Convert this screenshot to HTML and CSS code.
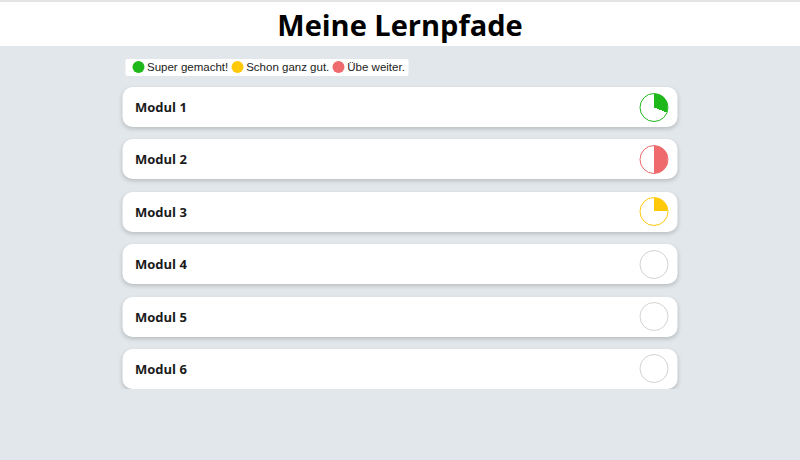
FILE: index.html
```html
<!DOCTYPE html>
<html lang="de">
<head>
    <meta charset="UTF-8">
    <meta name="viewport" content="width=device-width, initial-scale=1.0">
    <title>Meine Lernpfade</title>
    <link rel="stylesheet" href="styles.css">
</head>
<body>
    <header class="header">
        <h1>Meine Lernpfade</h1>
    </header>

    <main class="content">
        <div class="legend">
            <span class="dot dot-green"></span><span>Super gemacht!</span>
            <span class="dot dot-yellow"></span><span>Schon ganz gut.</span>
            <span class="dot dot-red"></span><span>Übe weiter.</span>
        </div>

        <div class="modules">
            <div class="module">
                <span class="module-name">Modul 1</span>
                <div class="progress green" style="--p: 31%"></div>
            </div>
            <div class="module">
                <span class="module-name">Modul 2</span>
                <div class="progress red" style="--p: 50%"></div>
            </div>
            <div class="module">
                <span class="module-name">Modul 3</span>
                <div class="progress yellow" style="--p: 25%"></div>
            </div>
            <div class="module">
                <span class="module-name">Modul 4</span>
                <div class="progress"></div>
            </div>
            <div class="module">
                <span class="module-name">Modul 5</span>
                <div class="progress"></div>
            </div>
            <div class="module">
                <span class="module-name">Modul 6</span>
                <div class="progress"></div>
            </div>
        </div>
    </main>
</body>
</html>
```

FILE: styles.css
```css
body {
    margin: 0;
    padding: 0;
    background-color: #e2e7eb;
    font-family: "Open Sans", sans-serif;
    color: #111;
}

.header {
    background-color: #fff;
    border-top: 2px solid #e4e4e4;
    height: 44px;
    display: flex;
    align-items: center;
    justify-content: center;
}

.header h1 {
    margin: 0;
    font-size: 29px;
    font-weight: 700;
    color: #000;
}

.content {
    width: 555px;
    margin: 0 auto;
    padding-top: 10px;
    transform: translateX(-0.5px);
}

.legend {
    display: inline-flex;
    align-items: center;
    gap: 3px;
    margin-left: 3px;
    padding: 0 4px 0 7px;
    background-color: #fff;
    border-radius: 2px;
    font-family: "Liberation Sans", Arial, sans-serif;
    font-size: 11.5px;
    color: #222;
    height: 17px;
}

.dot {
    width: 12px;
    height: 12px;
    border-radius: 50%;
    display: inline-block;
}

.dot-green { background-color: #1fb81b; }
.dot-yellow { background-color: #ffc90a; }
.dot-red { background-color: #ee6a6d; }

.modules {
    display: flex;
    flex-direction: column;
    gap: 12.4px;
    margin-top: 9px;
}

.module {
    height: 40px;
    background-color: #fff;
    border-radius: 10px;
    box-shadow: 0 2px 4px rgba(0, 0, 0, 0.18);
    display: flex;
    align-items: center;
    justify-content: space-between;
    padding: 0 9px 0 13px;
}

.module-name {
    font-size: 13px;
    font-weight: 700;
    color: #1a1a1a;
}

.progress {
    width: 27px;
    height: 27px;
    border-radius: 50%;
    border: 1px solid #d2d2d2;
    background-color: #fff;
}

.progress.green {
    border-color: #1fb81b;
    background: conic-gradient(#1fb81b var(--p), #fff 0);
}

.progress.red {
    border-color: #ee6a6d;
    background: conic-gradient(#ee6a6d var(--p), #fff 0);
}

.progress.yellow {
    border-color: #ffc90a;
    background: conic-gradient(#ffc90a var(--p), #fff 0);
}
```
